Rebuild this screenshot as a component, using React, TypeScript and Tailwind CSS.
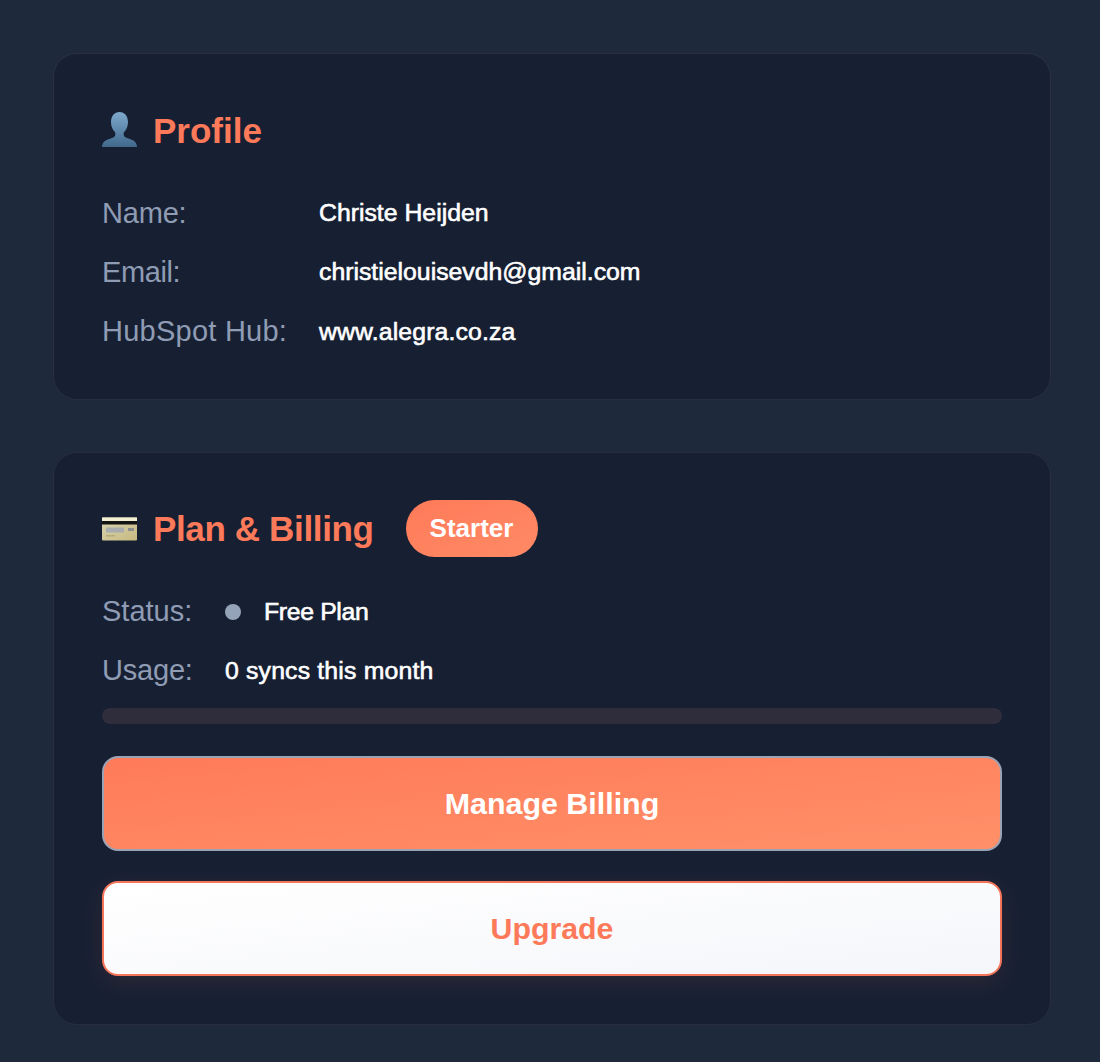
const font = "font-['Liberation_Sans',Arial,sans-serif]";
const value = "text-[24.8px] font-normal text-white [-webkit-text-stroke:0.6px_white]";

function PersonIcon() {
  return (
    <svg width="36" height="36" viewBox="0 0 36 36" className="-mt-[2px] shrink-0">
      <defs>
        <linearGradient id="person" x1="0" y1="0" x2="0" y2="1">
          <stop offset="0" stopColor="#7fa9cd" />
          <stop offset="1" stopColor="#40698c" />
        </linearGradient>
      </defs>
      <path
        d="M17.500 0c5.200 0 8.500 4.300 8.500 10 0 4.400-1.700 8.100-4.300 10.400v2.400c0 1.900 1.700 2.900 4.600 3.800 4.500 1.400 8.500 3 8.700 8.400H0c.2-5.400 4.200-7 8.700-8.400 2.900-.9 4.600-1.900 4.600-3.800v-2.400C10.700 18.100 9 14.400 9 10c0-5.700 3.300-10 8.500-10z"
        fill="url(#person)"
      />
    </svg>
  );
}

function CardIcon() {
  return (
    <svg width="36" height="36" viewBox="0 0 36 36" className="shrink-0">
      <defs>
        <linearGradient id="card" x1="0" y1="0" x2="1" y2="1">
          <stop offset="0" stopColor="#d9d5b4" />
          <stop offset="1" stopColor="#c7b97f" />
        </linearGradient>
      </defs>
      <rect x="0" y="6.500" width="35" height="23" rx="1" fill="url(#card)" />
      <rect x="0" y="6.500" width="35" height="3.500" fill="#f3efd2" />
      <rect x="0" y="10" width="35" height="3.500" fill="#141414" />
      <rect x="4" y="16.500" width="18" height="5" fill="#a9adb0" />
      <rect x="26" y="17" width="6" height="3" fill="#8b8f8e" />
      <rect x="4" y="24" width="9" height="1.500" fill="#b5aa78" />
    </svg>
  );
}

function Row({ label, labelClass, text, textClass }: { label: string; labelClass?: string; text: string; textClass?: string }) {
  return (
    <div className="flex h-[59px] items-center">
      <span className={`w-[217px] text-[29px] text-[#8f9cb3] ${labelClass ?? ""}`}>{label}</span>
      <span className={`${value} ${textClass ?? ""}`}>{text}</span>
    </div>
  );
}

export default function App() {
  return (
    <div className={`${font} flex min-h-[1062px] flex-col gap-[52px] bg-[#1e293b] pl-[53px] pt-[53px] antialiased`}>
      <section className="h-[347px] w-[998px] rounded-[24px] border border-[#2a2e42] bg-[#172033] px-[48px] pt-[48px]">
        <div className="flex h-[58px] items-center gap-[15px]">
          <PersonIcon />
          <h2 className="text-[35px] font-bold text-[#fc7a5a]">Profile</h2>
        </div>
        <div className="mt-[24px]">
          <Row label="Name:" labelClass="tracking-[-0.2px]" text="Christe Heijden" textClass="-mt-[2px]" />
          <Row label="Email:" labelClass="tracking-[-0.4px]" text="christielouisevdh@gmail.com" textClass="-mt-[2px]" />
          <Row label="HubSpot Hub:" labelClass="tracking-[0.25px]" text="www.alegra.co.za" textClass="tracking-[0.13px]" />
        </div>
      </section>

      <section className="h-[573px] w-[998px] rounded-[24px] border border-[#282d42] bg-[#172033] px-[48px] pt-[47px]">
        <div className="flex h-[57px] items-center">
          <CardIcon />
          <h2 className="ml-[15px] mt-[2px] text-[35px] font-bold tracking-[-0.36px] text-[#fc7a5a]">Plan &amp; Billing</h2>
          <span className="ml-[32px] flex h-[57px] w-[132px] items-center justify-center rounded-full bg-gradient-to-br from-[#ff7a59] to-[#ff8a65] text-[26px] font-bold text-white">
            Starter
          </span>
        </div>
        <div className="mt-[25px] flex h-[59px] items-center">
          <span className="w-[123px] text-[29px] text-[#8f9cb3]">Status:</span>
          <span className="h-4 w-4 rounded-full bg-[#94a3b8]" />
          <span className={`ml-[23px] tracking-[-0.35px] ${value}`}>Free Plan</span>
        </div>
        <div className="flex h-[59px] items-center">
          <span className="w-[123px] text-[29px] tracking-[-0.2px] text-[#8f9cb3]">Usage:</span>
          <span className={`tracking-[0.17px] ${value}`}>0 syncs this month</span>
        </div>
        <div className="mt-[8px] h-4 w-full rounded-full bg-[#2f2d3c]" />
        <button className="mt-[32px] flex h-[95px] w-full items-center justify-center rounded-[16px] border-2 border-[#9aa3b5] bg-gradient-to-br from-[#ff7a59] to-[#ff9068] text-[30.4px] font-bold text-white">
          Manage Billing
        </button>
        <button className="mt-[30px] flex h-[95px] w-full items-center justify-center rounded-[16px] border-2 border-[#f5755a] bg-gradient-to-br from-white to-[#f5f6fa] text-[30.3px] font-bold text-[#fc7a5a] shadow-[0_6px_24px_rgba(255,122,89,0.1)]">
          Upgrade
        </button>
      </section>
    </div>
  );
}
